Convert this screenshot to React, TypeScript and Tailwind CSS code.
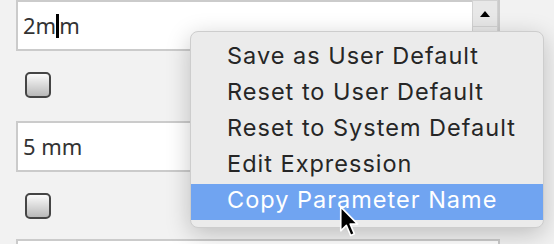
import React from "react";

const MENU = [
  "Save as User Default",
  "Reset to User Default",
  "Reset to System Default",
  "Edit Expression",
  "Copy Parameter Name",
];

function Checkbox() {
  return (
    <div className="w-[26px] h-[26px] rounded-[5px] border-2 border-[#454545] bg-gradient-to-b from-[#fbfbfb] to-[#b9b9b9]" />
  );
}

function Field({ children, spinner }: { children: React.ReactNode; spinner?: boolean }) {
  return (
    <div className="flex h-[51px] w-[484px] border-2 border-[#cbcbcb] bg-white">
      <div className="flex-1 flex items-center pl-[5px] text-[22px] text-[#333] font-['Noto_Sans',sans-serif]">
        {children}
      </div>
      {spinner && (
        <div className="w-[26px] flex flex-col bg-[#dedede] -mt-[2px]">
          <div className="h-[27px] flex items-center justify-center bg-[#e8e8e8] border border-[#d2d2d2]">
            <div className="w-0 h-0 border-l-[5px] border-r-[5px] border-b-[6px] border-l-transparent border-r-transparent border-b-black" />
          </div>
          <div className="flex-1 bg-[#e8e8e8] border border-t-0 border-[#d2d2d2]" />
        </div>
      )}
    </div>
  );
}

export default function App() {
  return (
    <div className="relative w-[554px] h-[244px] overflow-hidden bg-[#f2f2f2]">
      <div className="flex flex-col pl-[16px]">
        <Field spinner>
          <span>2m</span>
          <span className="inline-block w-[3px] h-[24px] bg-black" />
          <span>m</span>
        </Field>
        <div className="h-[70px] pl-[9px] pt-[21px]">
          <Checkbox />
        </div>
        <Field>5 mm</Field>
        <div className="h-[67px] pl-[9px] pt-[21px]">
          <Checkbox />
        </div>
        <Field>{""}</Field>
      </div>

      {/* Context menu */}
      <div className="absolute left-[190px] top-[31px] w-[354px] h-[197px] rounded-[8px] bg-[#ebebeb] border border-[#cdcdcd] shadow-[0_6px_24px_rgba(0,0,0,0.22)] pt-[8px] overflow-hidden font-['Inter',sans-serif]">
        {MENU.map((m, i) => (
          <div
            key={m}
            className={`h-[36px] pl-[36px] pb-[4px] leading-[32px] text-[23.5px] tracking-[1px] ${
              i === 4 ? "bg-[#70a4f1] text-white" : "text-[#262626]"
            }`}
          >
            {m}
          </div>
        ))}
      </div>

      {/* Mouse pointer */}
      <svg className="absolute left-[339px] top-[205px]" width="21" height="33" viewBox="0 0 18 28">
        <path
          d="M1.5 1.5 L1.5 22 L6.3 17.3 L10 26 L13.2 24.6 L9.6 16.2 L16 16.2 Z"
          fill="black"
          stroke="white"
          strokeWidth="1.4"
          strokeLinejoin="round"
        />
      </svg>
    </div>
  );
}
